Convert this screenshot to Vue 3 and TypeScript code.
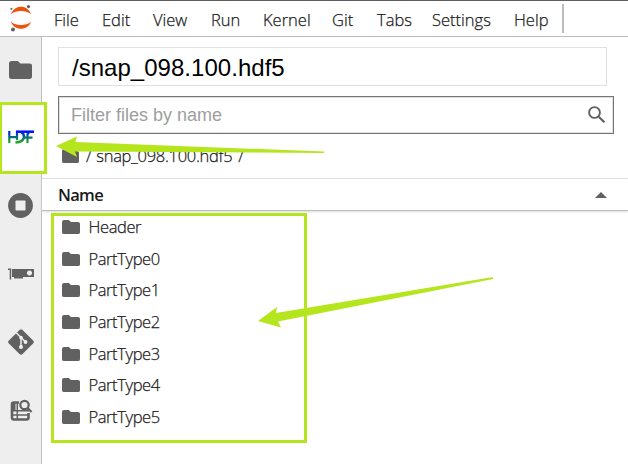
<script setup lang="ts">
const menus: string[] = ['File', 'Edit', 'View', 'Run', 'Kernel', 'Git', 'Tabs', 'Settings', 'Help']
const groups: string[] = ['Header', 'PartType0', 'PartType1', 'PartType2', 'PartType3', 'PartType4', 'PartType5']
const folder = 'M2.5 0H8l2.4 2.5h8.2A2.4 2.4 0 0 1 21 4.9v10.7A2.4 2.4 0 0 1 18.6 18H2.4A2.4 2.4 0 0 1 0 15.6V2.5A2.5 2.5 0 0 1 2.5 0Z'
</script>

<template>
  <div class="app">
    <header class="menubar">
      <svg class="logo" viewBox="0 0 24 30" width="24" height="30">
        <path d="M2 11.2C5 1.2 19 1.2 22 11.2 17 6.8 7 6.8 2 11.2Z" fill="#e9550d" />
        <path d="M2 18.8C5 28.2 19 28.2 22 18.8 17 23.2 7 23.2 2 18.8Z" fill="#e9550d" />
        <circle cx="19.5" cy="3.6" r="1.6" fill="#616161" />
        <circle cx="2.4" cy="5.8" r="1.1" fill="#757575" />
        <circle cx="4" cy="26.4" r="2" fill="#616161" />
      </svg>
      <nav class="menus"><span v-for="m in menus" :key="m">{{ m }}</span></nav>
      <i class="divider"></i>
    </header>

    <div class="body">
      <aside class="sidebar">
        <div class="tab folder-tab">
          <svg viewBox="0 0 21 18" width="23" height="18" preserveAspectRatio="none"><path :d="folder" fill="#616161" /></svg>
        </div>
        <div class="tab active">
          <svg viewBox="0 0 26 14" width="26" height="14">
            <defs>
              <linearGradient id="hdf" x1="0" y1="0" x2="0" y2="14" gradientUnits="userSpaceOnUse">
                <stop offset="0.1" stop-color="#0717f5" />
                <stop offset="0.5" stop-color="#086b80" />
                <stop offset="0.85" stop-color="#20a820" />
              </linearGradient>
            </defs>
            <g fill="none" stroke="url(#hdf)" stroke-width="2.2">
              <path d="M1.3 1V13M1 7.2H9M9 1V10" />
              <path d="M13 2C15.4 3.5 16.2 5.2 16 7.2 15.6 10.5 13 12.3 7.5 12.6" stroke-width="2.5" />
              <path d="M19.5 13V5Q19.5 2.5 22 2.2M16 7.6H24.5" />
            </g>
            <rect x="8" y=".4" width="18" height="2.6" fill="#0717f5" />
          </svg>
        </div>
        <div class="tab">
          <svg viewBox="0 0 25 25" width="25" height="25">
            <circle cx="12.5" cy="12.5" r="12.4" fill="#616161" />
            <rect x="7.5" y="7.5" width="10" height="10" rx=".8" fill="#eee" />
          </svg>
        </div>
        <div class="tab">
          <svg viewBox="0 0 26 12" width="26" height="12">
            <path fill="#616161" fill-rule="evenodd" d="M0 .5H3.2V11.5H1.7V2H0ZM4 1H26V9H15V10.5H6V9H4ZM21.5 2.4a2.6 2.6 0 1 0 .01 0Z" />
          </svg>
        </div>
        <div class="tab">
          <svg viewBox="0 0 26 26" width="26" height="26">
            <path fill="#616161" d="M11.5.9a2.1 2.1 0 0 1 3 0L25.1 11.5a2.1 2.1 0 0 1 0 3L14.5 25.1a2.1 2.1 0 0 1-3 0L.9 14.5a2.1 2.1 0 0 1 0-3Z" />
            <g stroke="#eee" stroke-width="1.5" fill="#eee">
              <path d="M8.3 3.8 13 8.5V18M13 8.5 17.5 13" fill="none" />
              <circle cx="13" cy="8.5" r="1.1" /><circle cx="13" cy="18" r="1.3" /><circle cx="17.5" cy="13" r="1.2" />
            </g>
          </svg>
        </div>
        <div class="tab">
          <svg viewBox="0 0 24 24" width="24" height="24">
            <path d="M10 3.5H4.5Q3 3.5 3 5V18.5Q3 20.5 5 20.5H17.5Q19.5 20.5 19.5 18.5V14" fill="none" stroke="#616161" stroke-width="2.6" />
            <path d="M8.3 3V20M3 11.7H20M3 16H19" fill="none" stroke="#616161" stroke-width="1.5" />
            <path d="M3 4H6.5V12H3Z" fill="#616161" />
            <circle cx="15.5" cy="6" r="4.2" fill="#eee" stroke="#616161" stroke-width="2.2" />
            <path d="m18.5 9.2 4 3.8" stroke="#616161" stroke-width="2.4" />
          </svg>
        </div>
      </aside>

      <main class="browser">
        <div class="path-box">/snap_098.100.hdf5</div>
        <div class="filter">
          <span>Filter files by name</span>
          <svg viewBox="0 0 18 18" width="18" height="18" fill="none" stroke="#616161" stroke-width="1.9">
            <circle cx="6.5" cy="6.5" r="5.4" /><path d="m10.7 10.7 5.7 5.5" stroke-width="2.2" />
          </svg>
        </div>
        <div class="crumbs">
          <svg viewBox="0 0 21 18" width="17" height="14" preserveAspectRatio="none"><path :d="folder" fill="#616161" /></svg>
          <span class="slash">/</span><span class="crumb">snap_098.100.hdf5</span><span>/</span>
        </div>
        <div class="list-head">
          <span>Name</span>
          <svg viewBox="0 0 12 6" width="12" height="6"><path d="M0 6 6 0 12 6Z" fill="#616161" /></svg>
        </div>
        <ul class="listing">
          <li v-for="g in groups" :key="g">
            <svg viewBox="0 0 21 18" width="18" height="14" preserveAspectRatio="none"><path :d="folder" fill="#616161" /></svg>
            <span>{{ g }}</span>
          </li>
        </ul>
      </main>
    </div>

    <svg class="annotations" viewBox="0 0 628 464" width="628" height="464">
      <g fill="none" stroke="#b5e61d" stroke-width="3">
        <rect x="0.5" y="103.5" width="45" height="69" />
        <rect x="52.5" y="214.5" width="253" height="227" />
      </g>
      <g fill="#b5e61d">
        <path d="M56 146 77 136.5 75.5 142 324 151.5V153L75 151.5 77 157Z" />
        <path d="M258 321 277 307 276 313 493 277V279L278 321.5 281 327.5Z" />
      </g>
    </svg>
  </div>
</template>

<style>
body { margin: 0; }
</style>

<style scoped>
.app { position: relative; width: 628px; height: 464px; overflow: hidden; background: #fff; color: #1a1a1a; font: 16.5px/22px "Open Sans", "Noto Sans", sans-serif; font-weight: 300; box-sizing: border-box; display: flex; flex-direction: column; }
svg { display: block; flex: none; }
.menubar { height: 37px; box-sizing: border-box; border-top: 1px solid #5f5e64; border-bottom: 1px solid #bdbdbd; display: flex; align-items: flex-start; flex: none; }
.logo { margin: 2px 0 0 9px; }
.menus { display: grid; grid-template-columns: 48px 51px 58px 52px 69px 45px 55px 82px 48px; margin: 8px 0 0 21px; white-space: nowrap; }
.menus, .crumbs, .listing { -webkit-text-stroke: .25px #1a1a1a; }
.divider { width: 2px; height: 29px; margin-top: 3px; background: #bdbdbd; }
.body { display: flex; flex: 1; }
.sidebar { width: 41px; background: #eee; border-right: 1px solid #bdbdbd; padding-top: 1px; }
.tab { height: 68.5px; display: flex; align-items: center; justify-content: center; }
.folder-tab { height: 64px; }
.active { width: 42px; height: 69px; background: #fff; }
.active svg { margin-right: 1px; }
.browser { flex: 1; display: flex; flex-direction: column; }
.path-box { width: 549px; height: 39px; margin: 10px 0 0 16px; box-sizing: border-box; padding-left: 13px; border: 1px solid #e0e0e0; font: 24px/39px "Liberation Sans", sans-serif; letter-spacing: .03px; color: #000; }
.filter { width: 556px; height: 38px; margin: 10px 0 0 16px; box-sizing: border-box; padding: 0 7px 0 12px; border: 1px solid #757575; box-shadow: inset 0 0 0 1px #e0e0e0; display: flex; align-items: center; justify-content: space-between; font: 18px "Liberation Sans", sans-serif; color: #9e9e9e; }
.crumbs { display: flex; align-items: center; height: 44px; padding-left: 20px; letter-spacing: -.3px; }
.slash { margin: 0 5px 0 7px; }
.crumb { margin-right: 6px; }
.list-head { height: 33px; box-sizing: border-box; border-top: 1px solid #e0e0e0; border-bottom: 1px solid #bdbdbd; box-shadow: 0 1px 2px #ddd; display: flex; align-items: center; justify-content: space-between; padding: 0 21px 0 16px; font-weight: 600; letter-spacing: -.7px; }
.listing { list-style: none; margin: 0; padding: 0 0 0 19.5px; letter-spacing: -.4px; }
.listing li { display: flex; align-items: center; gap: 9px; height: 31.7px; }
.annotations { position: absolute; left: 0; top: 0; pointer-events: none; }
</style>
